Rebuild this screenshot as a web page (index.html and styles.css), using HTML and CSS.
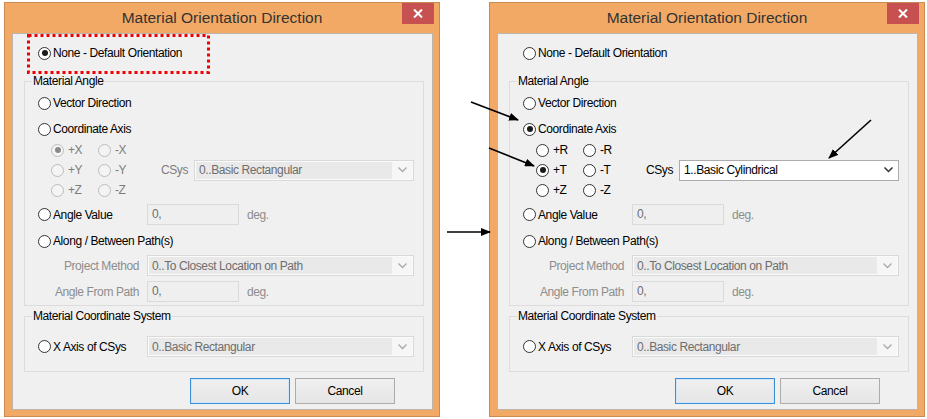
FILE: index.html
```html
<!DOCTYPE html>
<html>
  <head>
    <meta charset="UTF-8" />
    <title>Material Orientation Direction</title>
    <link rel="stylesheet" href="styles.css">
  </head>
  <body>
    <div class="stage">
      <!-- before -->
      <div class="dialog">
        <div class="titlebar">
          <span class="title">Material Orientation Direction</span>
          <span class="close"><svg width="10" height="9" viewBox="0 0 10 9"><path d="M1 0.5 L9 8.5 M9 0.5 L1 8.5" stroke="#fff" stroke-width="2"/></svg></span>
        </div>
        <div class="client">
          <div class="row top"><span class="radio on"></span>None - Default Orientation</div>
          <fieldset class="group angle">
            <legend>Material Angle</legend>
            <div class="row first"><span class="radio"></span>Vector Direction</div>
            <div class="row coord"><span class="radio"></span>Coordinate Axis</div>
            <div class="axes off">
              <div class="axis-grid">
                <div class="opt"><span class="radio dis on"></span>+X</div>
                <div class="opt"><span class="radio dis"></span>-X</div>
                <div class="opt"><span class="radio dis"></span>+Y</div>
                <div class="opt"><span class="radio dis"></span>-Y</div>
                <div class="opt"><span class="radio dis"></span>+Z</div>
                <div class="opt"><span class="radio dis"></span>-Z</div>
              </div>
              <span class="csys">CSys</span>
              <div class="combo dis"><span class="val">0..Basic Rectangular</span><span class="drop"><svg width="9" height="6" viewBox="0 0 9 6"><path d="M0.5 0.5 L4.5 4.5 L8.5 0.5" fill="none" stroke="#a8a8a8" stroke-width="1.3"/></svg></span></div>
            </div>
            <div class="frow angle-value">
              <div class="lead"><span class="radio"></span>Angle Value</div>
              <div class="tbox">0,</div>
              <span class="unit">deg.</span>
            </div>
            <div class="row along"><span class="radio"></span>Along / Between Path(s)</div>
            <div class="frow project">
              <div class="lead lbl">Project Method</div>
              <div class="combo dis"><span class="val">0..To Closest Location on Path</span><span class="drop"><svg width="9" height="6" viewBox="0 0 9 6"><path d="M0.5 0.5 L4.5 4.5 L8.5 0.5" fill="none" stroke="#a8a8a8" stroke-width="1.3"/></svg></span></div>
            </div>
            <div class="frow from">
              <div class="lead lbl">Angle From Path</div>
              <div class="tbox">0,</div>
              <span class="unit">deg.</span>
            </div>
          </fieldset>
          <fieldset class="group mcs">
            <legend>Material Coordinate System</legend>
            <div class="frow xaxis">
              <div class="lead"><span class="radio"></span>X Axis of CSys</div>
              <div class="combo dis"><span class="val">0..Basic Rectangular</span><span class="drop"><svg width="9" height="6" viewBox="0 0 9 6"><path d="M0.5 0.5 L4.5 4.5 L8.5 0.5" fill="none" stroke="#a8a8a8" stroke-width="1.3"/></svg></span></div>
            </div>
          </fieldset>
          <div class="buttons">
            <button class="btn default">OK</button>
            <button class="btn">Cancel</button>
          </div>
        </div>
        <svg class="highlight" width="183" height="40"><rect x="1.5" y="1.5" width="180" height="37" fill="none" stroke="#f00000" stroke-width="3" stroke-dasharray="3 3"/></svg>
      </div>

      <!-- after -->
      <div class="dialog">
        <div class="titlebar">
          <span class="title">Material Orientation Direction</span>
          <span class="close"><svg width="10" height="9" viewBox="0 0 10 9"><path d="M1 0.5 L9 8.5 M9 0.5 L1 8.5" stroke="#fff" stroke-width="2"/></svg></span>
        </div>
        <div class="client">
          <div class="row top"><span class="radio"></span>None - Default Orientation</div>
          <fieldset class="group angle">
            <legend>Material Angle</legend>
            <div class="row first"><span class="radio"></span>Vector Direction</div>
            <div class="row coord"><span class="radio on"></span>Coordinate Axis</div>
            <div class="axes">
              <div class="axis-grid">
                <div class="opt"><span class="radio"></span>+R</div>
                <div class="opt"><span class="radio"></span>-R</div>
                <div class="opt"><span class="radio on"></span>+T</div>
                <div class="opt"><span class="radio"></span>-T</div>
                <div class="opt"><span class="radio"></span>+Z</div>
                <div class="opt"><span class="radio"></span>-Z</div>
              </div>
              <span class="csys">CSys</span>
              <div class="combo"><span class="val">1..Basic Cylindrical</span><span class="drop"><svg width="9" height="6" viewBox="0 0 9 6"><path d="M0.5 0.5 L4.5 4.5 L8.5 0.5" fill="none" stroke="#333" stroke-width="1.5"/></svg></span></div>
            </div>
            <div class="frow angle-value">
              <div class="lead"><span class="radio"></span>Angle Value</div>
              <div class="tbox">0,</div>
              <span class="unit">deg.</span>
            </div>
            <div class="row along"><span class="radio"></span>Along / Between Path(s)</div>
            <div class="frow project">
              <div class="lead lbl">Project Method</div>
              <div class="combo dis"><span class="val">0..To Closest Location on Path</span><span class="drop"><svg width="9" height="6" viewBox="0 0 9 6"><path d="M0.5 0.5 L4.5 4.5 L8.5 0.5" fill="none" stroke="#a8a8a8" stroke-width="1.3"/></svg></span></div>
            </div>
            <div class="frow from">
              <div class="lead lbl">Angle From Path</div>
              <div class="tbox">0,</div>
              <span class="unit">deg.</span>
            </div>
          </fieldset>
          <fieldset class="group mcs">
            <legend>Material Coordinate System</legend>
            <div class="frow xaxis">
              <div class="lead"><span class="radio"></span>X Axis of CSys</div>
              <div class="combo dis"><span class="val">0..Basic Rectangular</span><span class="drop"><svg width="9" height="6" viewBox="0 0 9 6"><path d="M0.5 0.5 L4.5 4.5 L8.5 0.5" fill="none" stroke="#a8a8a8" stroke-width="1.3"/></svg></span></div>
            </div>
          </fieldset>
          <div class="buttons">
            <button class="btn default">OK</button>
            <button class="btn">Cancel</button>
          </div>
        </div>
      </div>

      <svg class="arrows" width="927" height="419">
        <defs>
          <marker id="ah" markerWidth="10" markerHeight="8" refX="9" refY="4" orient="auto" markerUnits="userSpaceOnUse">
            <path d="M0,0 L10,4 L0,8 z" fill="#000"/>
          </marker>
        </defs>
        <g stroke="#000" stroke-width="1.6" marker-end="url(#ah)">
          <line x1="471" y1="102" x2="518" y2="120"/>
          <line x1="489" y1="148" x2="534" y2="166"/>
          <line x1="871" y1="120" x2="829" y2="158"/>
          <line x1="447" y1="232" x2="490" y2="232"/>
        </g>
      </svg>
    </div>
  </body>
</html>
```

FILE: styles.css
```css
body {
  margin: 0;
  background: #fff;
  font-family: "Liberation Sans", Arial, sans-serif;
  font-size: 12px;
  letter-spacing: -0.4px;
  color: #000;
}
.stage {
  position: relative;
  display: flex;
  gap: 49px;
  padding: 2px 0 0 4px;
  height: 419px;
  box-sizing: border-box;
}
.dialog {
  position: relative;
  width: 436px;
  height: 415px;
  box-sizing: border-box;
  border: 1px solid #c98b53;
  background: #f2a965;
  display: flex;
  flex-direction: column;
}
.titlebar {
  display: grid;
  grid-template-columns: 1fr auto 1fr;
  height: 30px;
}
.title {
  grid-column: 2;
  align-self: center;
  padding-bottom: 1px;
  font-size: 15.5px;
  letter-spacing: 0;
  color: #333;
}
.close {
  grid-column: 3;
  justify-self: end;
  width: 32px;
  height: 21px;
  margin-right: 5px;
  background: #c75050;
  display: flex;
  align-items: center;
  justify-content: center;
}
.client {
  margin: 0 6px 0 7px;
  height: 377px;
  box-sizing: border-box;
  border: 1px solid #bdb4ab;
  background: #f0f0f0;
  display: flex;
  flex-direction: column;
}
.row {
  display: flex;
  align-items: center;
  height: 20px;
  gap: 2px;
  white-space: nowrap;
}
.row.top {
  margin: 9px 0 0 25px;
}
.radio {
  flex: none;
  position: relative;
  width: 13px;
  height: 13px;
  box-sizing: border-box;
  border: 1px solid #333;
  border-radius: 50%;
  background: #fff;
}
.radio.on::after {
  content: "";
  position: absolute;
  left: 2.5px;
  top: 2.5px;
  width: 6px;
  height: 6px;
  border-radius: 50%;
  background: #1a1a1a;
}
.radio.dis {
  border-color: #bcbcbc;
  background: #f4f4f4;
}
.radio.dis.on::after {
  background: #8a8a8a;
}
.group {
  margin: 10px 8px 0 11px;
  padding: 4px 9px 3px 13px;
  border: 1px solid #dcdcdc;
  min-width: 0;
}
.group legend {
  margin-left: -6px;
  padding: 0 1px;
  line-height: 16px;
  color: #000;
}
.group.mcs {
  margin-top: 2px;
  padding-top: 12px;
  padding-bottom: 14px;
}
.row.coord {
  margin-top: 6px;
}
.axes {
  display: flex;
  align-items: center;
  margin-top: 1px;
}
.axis-grid {
  display: grid;
  grid-template-columns: 47px 47px;
  grid-auto-rows: 20px;
  margin-left: 13px;
}
.opt {
  display: flex;
  align-items: center;
  gap: 4px;
}
.axes.off .opt,
.axes.off .csys {
  color: #7d7d7d;
}
.csys {
  margin: 0 6px 0 16px;
}
.combo {
  flex: 1;
  height: 21px;
  box-sizing: border-box;
  border: 1px solid #acacac;
  background: #fff;
  display: flex;
  align-items: center;
}
.combo .val {
  flex: 1;
  padding-left: 4px;
  white-space: nowrap;
}
.combo .drop {
  width: 20px;
  height: 100%;
  display: flex;
  align-items: center;
  justify-content: center;
}
.combo.dis {
  border-color: #d9d9d9;
  padding: 1px;
  background: #fbfbfb;
  color: #6d6d6d;
}
.combo.dis .val {
  align-self: stretch;
  display: flex;
  align-items: center;
  padding-left: 3px;
  background: #e9e9e9;
}
.combo.dis .drop {
  background: #f6f6f6;
}
.frow {
  display: flex;
  align-items: center;
  height: 21px;
}
.frow .lead {
  flex: none;
  width: 109px;
  display: flex;
  align-items: center;
  gap: 2px;
  white-space: nowrap;
}
.frow .lead.lbl {
  justify-content: flex-end;
  padding-right: 8px;
  box-sizing: border-box;
  color: #8d8d8d;
}
.tbox {
  width: 92px;
  height: 21px;
  box-sizing: border-box;
  border: 1px solid #dadada;
  background: #efefef;
  color: #6d6d6d;
  padding-left: 4px;
  line-height: 19px;
}
.unit {
  margin-left: 8px;
  color: #8d8d8d;
}
.angle-value {
  margin-top: 4px;
}
.row.along {
  margin-top: 6px;
}
.project {
  margin-top: 4px;
}
.from {
  margin-top: 5px;
}
.buttons {
  display: flex;
  justify-content: flex-end;
  gap: 5px;
  margin-top: 6px;
  padding-right: 37px;
}
.btn {
  width: 100px;
  height: 26px;
  border: 1px solid #acacac;
  background: linear-gradient(#f0f0f0, #e5e5e5);
  font-family: "Liberation Sans", Arial, sans-serif;
  font-size: 12px;
  letter-spacing: -0.4px;
  color: #000;
  padding: 0;
}
.btn.default {
  border-color: #3c8fd6;
  box-shadow: inset 0 0 0 1px #cfe6fb;
}
.highlight {
  position: absolute;
  left: 22px;
  top: 31px;
}
.arrows {
  position: absolute;
  left: 0;
  top: 0;
  pointer-events: none;
}
```
